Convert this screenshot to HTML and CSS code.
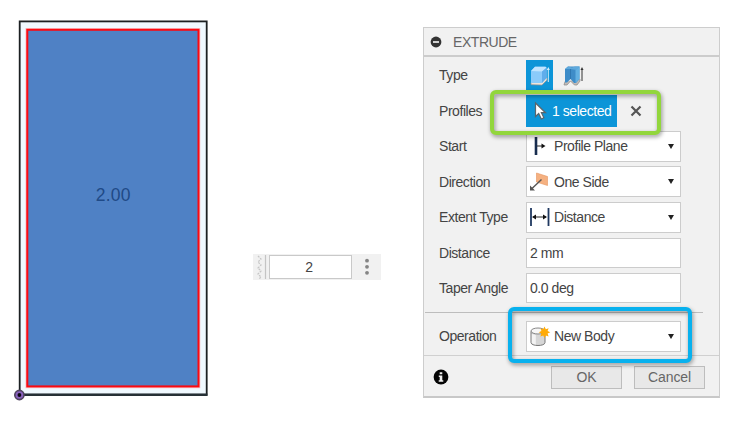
FILE: index.html
```html
<!DOCTYPE html>
<html lang="en">
<head>
<meta charset="utf-8">
<title>Extrude</title>
<link rel="stylesheet" href="styles.css">
</head>
<body>
<main class="workspace">
  <svg class="sketch" viewBox="0 0 220 422" width="220" height="422">
    <rect x="19.700" y="21.400" width="187" height="373.400" fill="#f0f9ff" stroke="#1c2022" stroke-width="1.800"/>
    <path d="M18 394.800h189.400" stroke="#263036" stroke-width="2.600"/>
    <rect x="27.100" y="29.600" width="171.600" height="357" fill="#4f81c5" stroke="#f5bfc4" stroke-width="3.200"/>
    <rect x="27.300" y="29.800" width="171.200" height="356.600" fill="#4f81c5" stroke="#fb0a12" stroke-width="2"/>
    <circle cx="19.400" cy="395" r="4.600" fill="#8861bd" stroke="#50445f" stroke-width="1.600"/>
    <circle cx="19.400" cy="395" r="1.900" fill="#0d0714"/>
    <text class="dimension" x="113.300" y="200.800" text-anchor="middle">2.00</text>
  </svg>

  <div class="manipulator">
    <svg width="14" height="26" viewBox="0 0 14 26">
      <path d="M5 2l3 3-3 3 3 3-3 3 3 3-3 3 3 3-2 2" fill="none" stroke="#c6c6c6" stroke-width="1.300" stroke-dasharray="2 1"/>
      <path d="M12.500 1v24" stroke="#c4c4c4" stroke-width="1.200"/>
    </svg>
    <div class="value">2</div>
    <svg width="10" height="26" viewBox="0 0 10 26" fill="#858585"><circle cx="5" cy="6.700" r="1.900"/><circle cx="5" cy="12.800" r="1.900"/><circle cx="5" cy="18.800" r="1.900"/></svg>
  </div>

  <section class="dialog">
    <header class="title">
      <svg width="12" height="12" viewBox="0 0 12 12"><circle cx="6" cy="6" r="5.400" fill="#333"/><path d="M3 6h6" stroke="#eee" stroke-width="1.700"/></svg>
      <span>EXTRUDE</span>
    </header>
    <div class="rows">
      <div class="row">
        <span class="label">Type</span>
        <span class="tool active">
          <svg width="27" height="30" viewBox="0 0 27 30">
            <path d="M5 22.500v2.200l11 .4 5-5v-2" fill="#eee5dc" stroke="#938f8e" stroke-width=".7"/>
            <path d="M5 11l4-4.300h10.500l1 1V18l-4.500 5H5z" fill="#8bcbfa"/>
            <path d="M5 11l4-4.300h10.500l1 1-4.500 3.800z" fill="#c1e5ff"/>
            <path d="M16 11.500l4.500-3.800V18L16 23z" fill="#5fadeb"/>
            <path d="M22.300 22V9" stroke="#d5edfa"/><path d="M20.800 10l1.500-3 1.500 3z" fill="#d5edfa"/>
          </svg>
        </span>
        <span class="tool">
          <svg width="27" height="30" viewBox="0 0 27 30">
            <path d="M5 21.500l-1 3.500h3l3.500-4 4 4h2.500l3-4v-2" fill="#c4bcb7" stroke="#888" stroke-width=".7"/>
            <path d="M5 9l3-2.500h11.500V19L16 23h-2l-3.500-4L7 22.500H5z" fill="#3e8cc8"/>
            <path d="M5 9l3-2.500 4 1 3-1h4.500l-3 3.500-6-1z" fill="#5fa9dc"/>
            <path d="M15.500 10.500l4-4V19l-4 4z" fill="#62b0e2"/>
            <path d="M10.500 9v10" stroke="#2f78b2"/>
            <path d="M22 21V9" stroke="#333"/><path d="M20.500 10L22 7l1.500 3z" fill="#333"/>
          </svg>
        </span>
      </div>
      <div class="row profiles">
        <span class="label">Profiles</span>
        <span class="selection">
          <svg width="13" height="20" viewBox="0 0 13 20"><path d="M1.500 2v13.500l3.200-3 2.600 5.500 2.600-1.300-2.500-5h4.100z" fill="#fff" stroke="#59666d" stroke-width="1.200"/></svg>
          <span>1 selected</span>
        </span>
        <svg class="clear" width="12" height="12" viewBox="0 0 12 12"><path d="M1.500 1.500l9 9m0-9l-9 9" stroke="#555" stroke-width="2.200"/></svg>
        <span class="highlight green"></span>
      </div>
      <div class="row">
        <span class="label">Start</span>
        <div class="select">
          <svg width="27" height="28" viewBox="0 0 27 28"><path d="M9 5v18" stroke="#182d4f" stroke-width="2.600"/><path d="M10 14h6" stroke="#222"/><path d="M14.500 11.500l4 2.500-4 2.500z" fill="#111"/></svg>
          <span>Profile Plane</span><i class="arrow"></i>
        </div>
      </div>
      <div class="row">
        <span class="label">Direction</span>
        <div class="select">
          <svg width="27" height="28" viewBox="0 0 27 28"><path d="M9.500 5l11 3.500v9l-11-3.500z" fill="#f5b181" stroke="#e6935e" stroke-width=".6"/><path d="M14.500 11.500L5 20.500" stroke="#555" stroke-width="1.400"/><path d="M3 22.500v-5l5 5z" fill="#555"/></svg>
          <span>One Side</span><i class="arrow"></i>
        </div>
      </div>
      <div class="row">
        <span class="label">Extent Type</span>
        <div class="select">
          <svg width="27" height="28" viewBox="0 0 27 28"><path d="M4 5v18M21.500 5v18" stroke="#203961" stroke-width="1.800"/><path d="M6 14h13" stroke="#222"/><path d="M5 14l4-2.500v5zM20 14l-4-2.500v5z" fill="#111"/></svg>
          <span>Distance</span><i class="arrow"></i>
        </div>
      </div>
      <div class="row">
        <span class="label">Distance</span>
        <div class="input">2 mm</div>
      </div>
      <div class="row">
        <span class="label">Taper Angle</span>
        <div class="input">0.0 deg</div>
      </div>
    </div>
    <div class="divider"></div>
    <div class="row operation">
      <span class="label">Operation</span>
      <div class="select">
        <svg width="27" height="28" viewBox="0 0 27 28">
          <path d="M4 9.500v11c0 4 14 4 14 0v-11z" fill="#d6d6d6" stroke="#777"/>
          <path d="M4.800 12v8.500c0 1 2 1.800 4 2.100V13z" fill="#f3f3f3"/>
          <ellipse cx="11" cy="9" rx="7" ry="3" fill="#f7f7f7" stroke="#888"/>
          <path d="M17.500 4.500l1.300 2.700 2.800-1-1 2.800 2.700 1.300-2.700 1.300 1 2.800-2.800-1-1.300 2.700-1.300-2.700-2.800 1 1-2.800-2.700-1.300L14.400 9l-1-2.800 2.800 1z" fill="#ffab08"/>
        </svg>
        <span>New Body</span><i class="arrow"></i>
      </div>
      <span class="highlight blue"></span>
    </div>
    <footer class="actions">
      <svg class="info" width="16" height="16" viewBox="0 0 16 16"><circle cx="8" cy="8" r="7.400" fill="#050505"/><path d="M6.700 3.300h2.600v2H6.700zM5.800 6.500h3.500v4.700h1v1.500H5.700v-1.500h1V8h-.9z" fill="#f0f0f0"/></svg>
      <div class="button">OK</div>
      <div class="button">Cancel</div>
    </footer>
  </section>
</main>
</body>
</html>
```
FILE: styles.css
```css
* { box-sizing: border-box; }
body {
  margin: 0;
  background: #fff;
  color: #444;
  font: 14px/16px "Liberation Sans", Arial, sans-serif;
  letter-spacing: -0.45px;
}
svg { display: block; flex: none; }
.workspace { display: flex; width: 752px; height: 422px; overflow: hidden; }
.sketch { flex: none; }
.dimension { font-size: 17.5px; letter-spacing: 0.2px; fill: #1f4a87; }

.manipulator {
  display: flex;
  align-items: center;
  flex: none;
  width: 128px;
  height: 26px;
  margin: 254px 0 0 33px;
  background: #f1f1f1;
}
.value {
  width: 83px;
  height: 24px;
  margin: 0 10px 0 2px;
  padding-right: 3px;
  border: 1px solid #c9c9c9;
  background: #fff;
  text-align: center;
  line-height: 23px;
}

.dialog {
  flex: none;
  width: 297px;
  height: 371px;
  margin: 27px 0 0 42px;
  border: 1px solid #cdcdcd;
  border-bottom: 2px solid #c8c8c8;
  background: #f1f1f1;
}
.title {
  display: flex;
  align-items: center;
  gap: 11px;
  height: 29px;
  padding-left: 6px;
  border-bottom: 2px solid #ccc;
  color: #666;
}
.rows { padding-top: 0.5px; }
.row {
  position: relative;
  display: flex;
  align-items: center;
  height: 35.5px;
  padding-left: 15px;
}
.label { flex: none; width: 87px; }
.tool { width: 27px; height: 30px; margin-right: 7px; }
.active { background: #0c95d8; }
.profiles { z-index: 1; }
.selection {
  display: flex;
  align-items: center;
  gap: 5px;
  width: 91px;
  height: 32px;
  padding-left: 8px;
  background: #0c95d8;
  color: #fff;
}
.clear { margin-left: 13px; }
.select, .input {
  display: flex;
  align-items: center;
  width: 155px;
  height: 31px;
  border: 1px solid #ccc;
  background: #fff;
}
.input { height: 30px; padding-left: 3px; }
.arrow {
  margin: 0 6px 0 auto;
  border: 3.5px solid transparent;
  border-top: 5px solid #222;
  border-bottom: 0;
}
.highlight {
  position: absolute;
  border: 4px solid;
  border-radius: 6px;
  filter: drop-shadow(1px 2px 2px rgba(0, 0, 0, 0.4));
}
.green { left: 66px; top: -3.5px; width: 171px; height: 45.5px; border-color: #92d63c; }
.blue { left: 84px; top: -6px; width: 184px; height: 56px; border-color: #08b1ee; }
.divider { width: 278px; height: 1px; margin: 6px 0 0 1px; background: #bdbdbd; }
.operation { height: 42px; padding-top: 4px; }
.actions {
  display: flex;
  align-items: center;
  height: 43px;
  padding-left: 9px;
  border-top: 1px solid #d0d0d0;
}
.info { margin-right: 102px; }
.button {
  width: 71px;
  height: 23px;
  margin-right: 12px;
  border: 1px solid #bdbdbd;
  background: #e8e8e8;
  color: #666;
  text-align: center;
  line-height: 21px;
  letter-spacing: -0.1px;
}
```
